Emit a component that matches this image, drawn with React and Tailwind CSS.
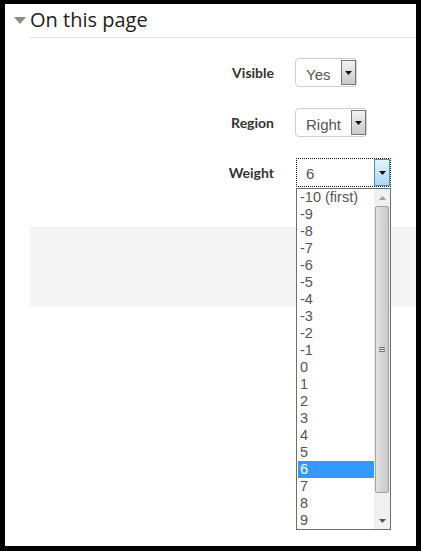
import React from 'react'

const options = ['-10 (first)', '-9', '-8', '-7', '-6', '-5', '-4', '-3', '-2', '-1', '0', '1', '2', '3', '4', '5', '6', '7', '8', '9']

function Arrow() {
  return (
    <svg width="7" height="4" viewBox="0 0 7 4">
      <path d="M0 0h7L3.5 4z" fill="#111" />
    </svg>
  )
}

function SelectBox({ value, width }) {
  return (
    <div className={`flex h-[29px] ${width} items-stretch rounded-[4px] border border-[#cfcfcf] bg-white`}>
      <span className="flex-1 pl-[10px] pt-[5px] text-[15px] text-[#555] font-['Liberation_Sans',Arial,sans-serif]">{value}</span>
      <span className="my-[1px] flex w-[15px] items-center justify-center border border-[#777] bg-gradient-to-b from-[#f3f3f3] to-[#c9c9c9]">
        <Arrow />
      </span>
    </div>
  )
}

function Row({ label, children }) {
  return (
    <div className="flex items-center">
      <span className="w-[290px] pr-[21px] text-right text-[14px] font-bold text-[#333] font-['Lato',sans-serif]">{label}</span>
      {children}
    </div>
  )
}

export default function App() {
  return (
    <div className="flex h-[551px] w-[421px] bg-black pt-[4px] pl-[5px] pr-[5px] pb-[5px]">
      <div className="relative flex-1 bg-white">
        <div className="flex items-center pl-[9px] pt-[2px]">
          <svg width="12" height="7" viewBox="0 0 12 7" className="mr-[4px] mt-[1px]">
            <path d="M0 0h12L6 7z" fill="#8a8a8a" />
          </svg>
          <h2 className="text-[20px] leading-[28px] text-[#222] font-['Open_Sans',sans-serif]">On this page</h2>
        </div>
        <div className="ml-[25px] mt-[3px] h-px bg-[#e3e3e3]" />

        <div className="mt-[20px] flex flex-col gap-[21px]">
          <Row label="Visible">
            <SelectBox value="Yes" width="w-[62px]" />
          </Row>
          <Row label="Region">
            <SelectBox value="Right" width="w-[72px]" />
          </Row>
          <Row label="Weight">
            <div className="ml-[1px] flex h-[29px] w-[95px] border border-dotted border-[#222] bg-white">
              <span className="flex-1 pl-[9px] pt-[4px] text-[15px] text-[#555] font-['Liberation_Sans',Arial,sans-serif]">6</span>
              <span className="flex w-[16px] items-center justify-center border border-[#4d8fc2] bg-gradient-to-b from-[#e5f4ff] to-[#a9d6f7]">
                <Arrow />
              </span>
            </div>
          </Row>
        </div>

        <div className="ml-[25px] mt-[40px] h-[80px] border-t border-[#eaeaea] bg-[#f5f5f5]" />

        <div className="absolute left-[291px] top-[184px] flex h-[342px] w-[95px] border border-[#6e6e6e] bg-white font-['Liberation_Sans',Arial,sans-serif]">
          <ul className="flex-1 pl-[1px]">
            {options.map(o => (
              <li
                key={o}
                className={`h-[17px] pl-[2px] text-[14.5px] leading-[17px] ${o === '6' ? 'bg-[#3399ff] text-white' : 'text-[#555]'}`}
              >
                {o}
              </li>
            ))}
          </ul>
          <div className="flex w-[16px] flex-col bg-[#f0f0f0]">
            <div className="flex h-[17px] items-center justify-center">
              <svg width="7" height="4" viewBox="0 0 7 4"><path d="M0 4h7L3.5 0z" fill="#a0a0a0" /></svg>
            </div>
            <div className="mx-[1px] flex h-[287px] items-center justify-center rounded-[2px] border border-[#a3a3a3] bg-gradient-to-r from-[#e2e2e2] via-[#d6d6d6] to-[#c8c8c8]">
              <div className="flex flex-col gap-[1px]">
                <div className="h-px w-[6px] bg-[#777]" />
                <div className="h-px w-[6px] bg-[#777]" />
                <div className="h-px w-[6px] bg-[#777]" />
              </div>
            </div>
            <div className="flex-1" />
            <div className="flex h-[17px] items-center justify-center">
              <svg width="7" height="4" viewBox="0 0 7 4"><path d="M0 0h7L3.5 4z" fill="#555" /></svg>
            </div>
          </div>
        </div>
      </div>
    </div>
  )
}
